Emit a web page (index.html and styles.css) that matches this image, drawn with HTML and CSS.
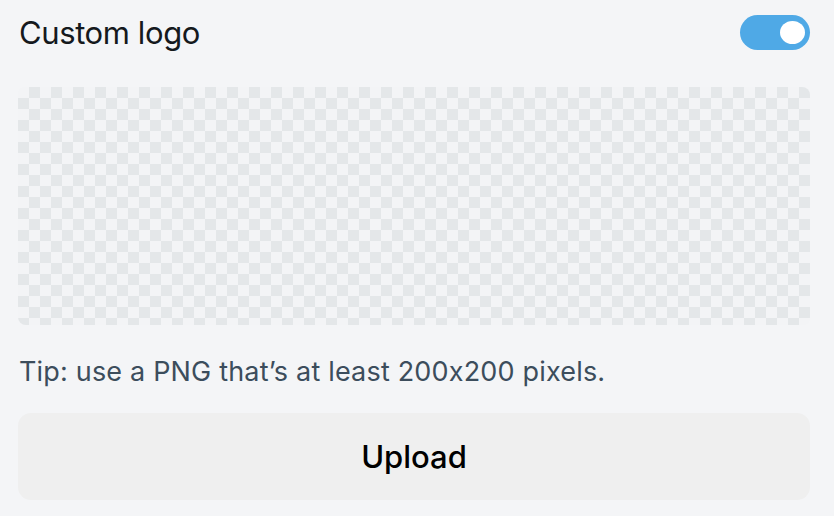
FILE: index.html
```html
<!DOCTYPE html>
<html>
<head>
<meta charset="utf-8">
<link rel="stylesheet" href="styles.css">
</head>
<body>
<div class="panel">
  <div class="header">
    <span class="title">Custom logo</span>
    <span class="toggle"><span class="knob"></span></span>
  </div>
  <div class="preview"></div>
  <p class="tip">Tip: use a PNG that’s at least 200x200 pixels.</p>
  <button class="upload">Upload</button>
</div>
</body>
</html>
```

FILE: styles.css
```css
html, body {
  margin: 0;
  padding: 0;
  background: #f4f5f7;
}
body {
  width: 834px;
  height: 516px;
  overflow: hidden;
  font-family: "Inter", "Lato", sans-serif;
  font-feature-settings: "calt" 0;
}
.panel {
  padding: 15px 24px 0 18px;
  display: flex;
  flex-direction: column;
}
.header {
  display: flex;
  align-items: center;
  justify-content: space-between;
  height: 35px;
}
.title {
  font-size: 31px;
  line-height: 35px;
  color: #15191d;
  padding-left: 1px;
  letter-spacing: -0.4px;
}
.toggle {
  width: 70px;
  height: 35px;
  border-radius: 18px;
  background: #4fa9e6;
  display: flex;
  align-items: center;
  justify-content: flex-end;
  padding-right: 5px;
  box-sizing: border-box;
}
.knob {
  width: 25px;
  height: 23px;
  border-radius: 50%;
  background: #fff;
}
.preview {
  margin-top: 37px;
  height: 238px;
  border-radius: 8px;
  background-color: #f3f4f6;
  background-image:
    linear-gradient(45deg, #e4e7e9 25%, transparent 25%, transparent 75%, #e4e7e9 75%),
    linear-gradient(45deg, #e4e7e9 25%, transparent 25%, transparent 75%, #e4e7e9 75%);
  background-size: 22px 22px;
  background-position: 0 0, 11px 11px;
}
.tip {
  margin: 31px 0 0 1px;
  font-size: 27px;
  color: #3c4d5c;
  line-height: 32px;
  letter-spacing: 0.18px;
}
.upload {
  margin-top: 25px;
  height: 87px;
  border: none;
  border-radius: 13px;
  background: #efefef;
  font-family: inherit;
  font-feature-settings: "calt" 0;
  font-size: 31px;
  font-weight: 500;
  color: #000;
  cursor: pointer;
}
```
